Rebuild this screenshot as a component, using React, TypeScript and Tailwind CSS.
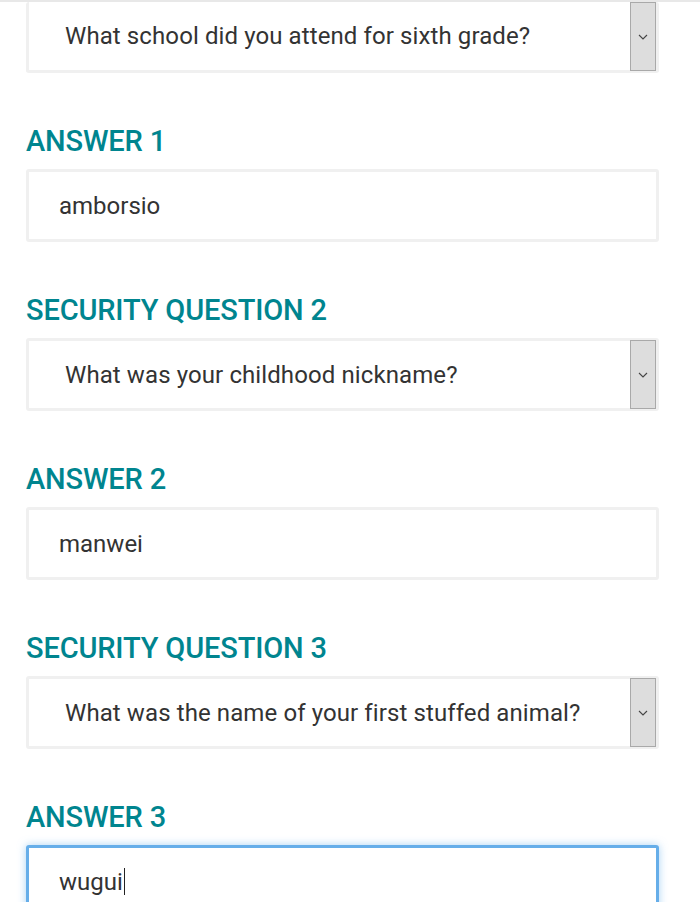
import React from "react";

const font = { fontFamily: "Roboto, 'Noto Sans', sans-serif" };

function Chevron() {
  return (
    <svg width="10" height="6" viewBox="0 0 10 6" fill="none">
      <path d="M1 1 L5 5 L9 1" stroke="#444" strokeWidth="1.1" />
    </svg>
  );
}

function SelectBox({ text, first }: { text: string; first?: boolean }) {
  return (
    <div
      className={`relative w-[633px] ${first ? "h-[71px] border-t-0" : "h-[73px]"} border-[3px] border-[#f0f0f0] rounded-[3px] bg-white flex items-center`}
    >
      <span className="pl-[36px] text-[24px] tracking-[0.1px] text-[#333333] leading-none">{text}</span>
      <div className={`absolute right-[0px] ${first ? "top-[0px]" : "top-[-1px]"} bottom-[-1px] w-[26px] bg-[#dddddd] border border-[#a9a9a9] flex items-center justify-center`}>
        <Chevron />
      </div>
    </div>
  );
}

function InputBox({ text, focused }: { text: string; focused?: boolean }) {
  return (
    <div
      className={`w-[633px] h-[73px] border-[3px] rounded-[3px] bg-white flex items-center ${
        focused
          ? "border-[#66aee9] shadow-[0_0_8px_rgba(102,174,233,0.55)]"
          : "border-[#f0f0f0]"
      }`}
    >
      <span className="pl-[30px] text-[24px] text-[#333333] leading-none flex items-center">
        {text}
        {focused && <span className="inline-block w-[1px] h-[27px] bg-[#222] ml-[1px]" />}
      </span>
    </div>
  );
}

function Label({ text }: { text: string }) {
  return (
    <div className="mt-[50px] mb-[10px] h-[36px] text-[29px] leading-[36px] font-medium text-[#00858f] tracking-[-0.15px]">
      {text}
    </div>
  );
}

export default function App() {
  return (
    <div className="w-[700px] h-[902px] overflow-hidden bg-white" style={font}>
      <div className="h-[2px] bg-[#e8e8e8]" />
      <div className="pl-[26px]">
        <SelectBox text="What school did you attend for sixth grade?" first />
        <Label text="ANSWER 1" />
        <InputBox text="amborsio" />
        <Label text="SECURITY QUESTION 2" />
        <SelectBox text="What was your childhood nickname?" />
        <Label text="ANSWER 2" />
        <InputBox text="manwei" />
        <Label text="SECURITY QUESTION 3" />
        <SelectBox text="What was the name of your first stuffed animal?" />
        <Label text="ANSWER 3" />
        <InputBox text="wugui" focused />
      </div>
    </div>
  );
}
